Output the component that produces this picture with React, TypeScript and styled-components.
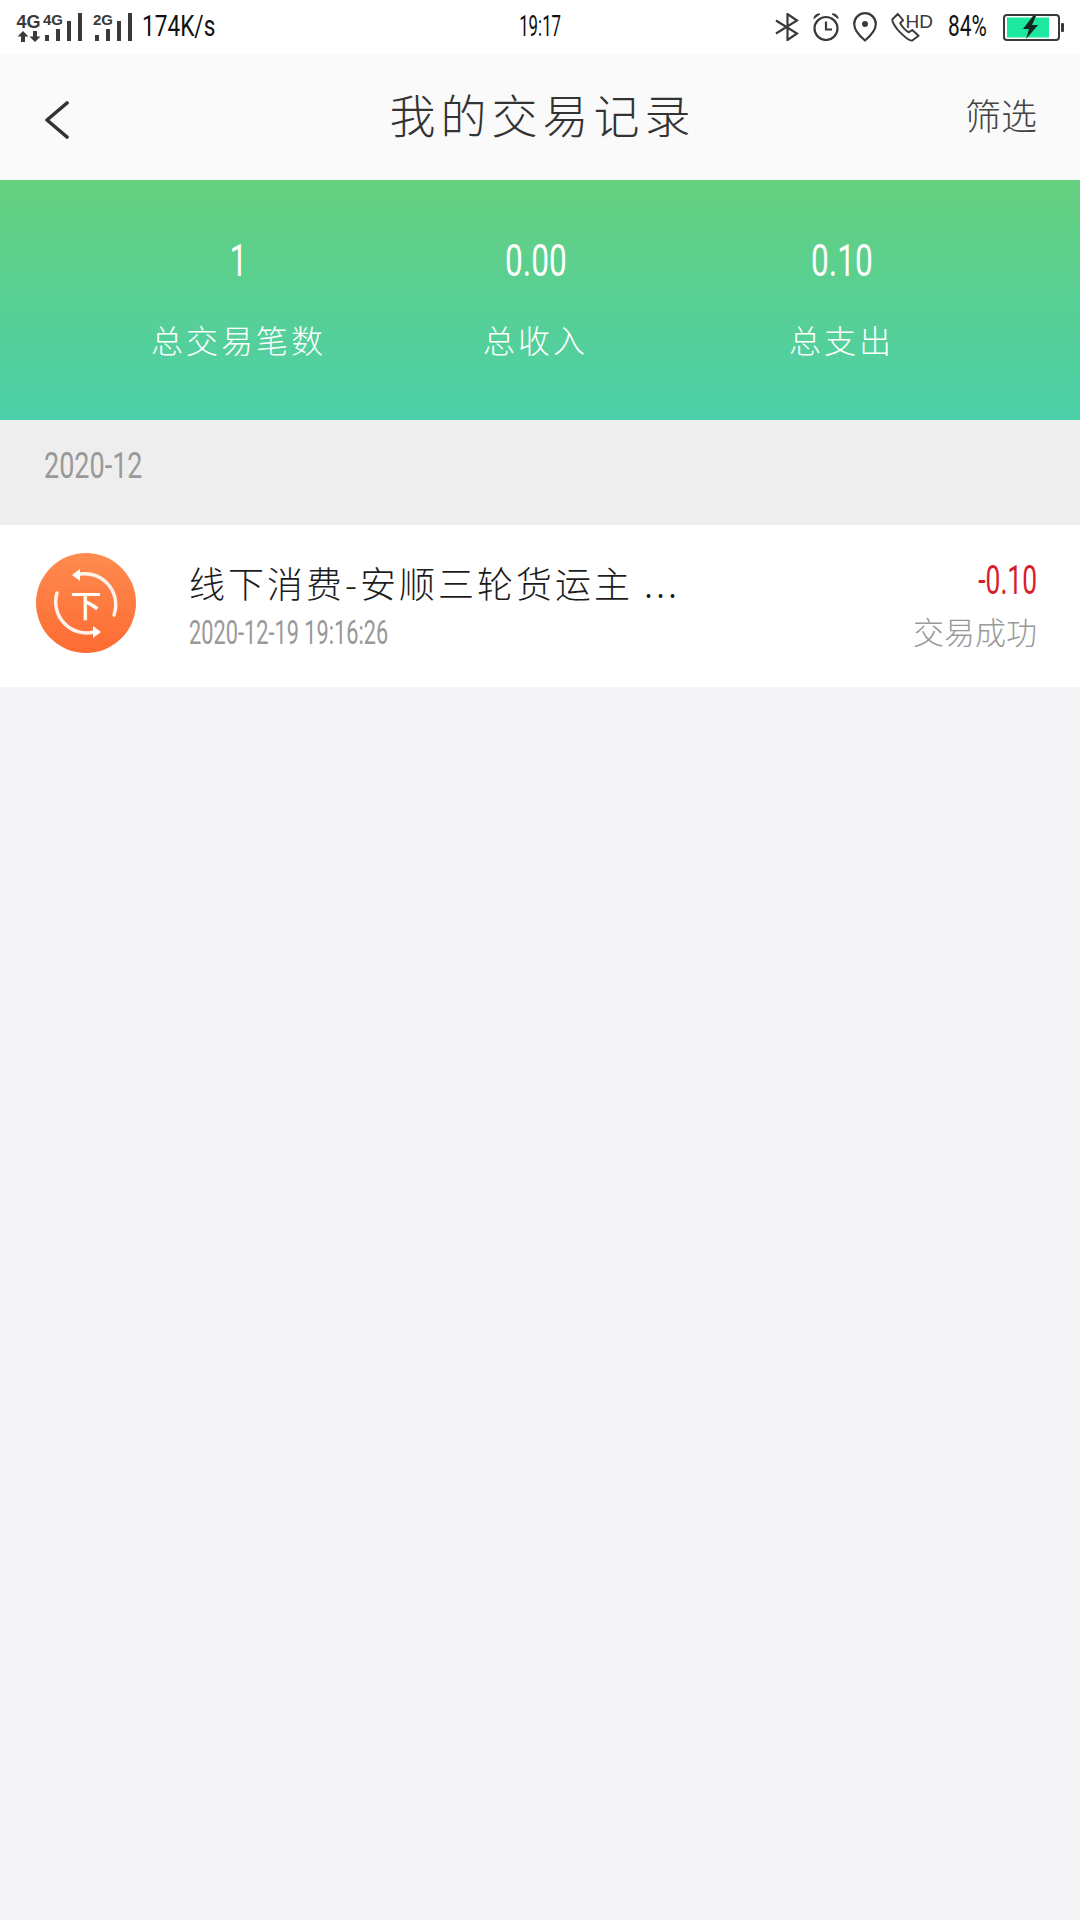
import React from 'react';
import styled, { createGlobalStyle } from 'styled-components';

const GlobalStyle = createGlobalStyle`
	html, body {
		margin: 0;
		padding: 0;
		background-color: #f4f4f6;
	}
	* {
		box-sizing: border-box;
	}
`;

const cjk = `'Noto Sans CJK SC', 'Noto Sans', sans-serif`;
const digits = `Roboto, 'Liberation Sans', sans-serif`;

const SignalBars = () => (
	<svg width="38" height="28" viewBox="0 0 38 28" fill="#3a3a3a">
		<rect x="1" y="22" width="4" height="6" />
		<rect x="12" y="16" width="4" height="12" />
		<rect x="23" y="8" width="4" height="20" />
		<rect x="34" y="0" width="4" height="28" />
	</svg>
);

const Arrows = () => (
	<svg width="24" height="11" viewBox="0 0 24 11" fill="#3a3a3a">
		<path d="M6 0l5.500 5.500H8V11H4V5.500H.5zM18 11l-5.500-5.500H16V0h4v5.500h3.500z" />
	</svg>
);

const Bluetooth = () => (
	<svg width="24" height="28" viewBox="0 0 24 28" fill="none" stroke="#3a3a3a" strokeWidth="2.200">
		<path d="M1 7.500l21 13-9.500 6.500V1L22 7.500 1 20.500" />
	</svg>
);

const Alarm = () => (
	<svg width="26" height="28" viewBox="0 0 26 28" fill="none" stroke="#3a3a3a" strokeWidth="2.200">
		<circle cx="13" cy="15.500" r="11.500" />
		<path d="M13 8.500v8h6" />
		<path d="M.8 5.500C1.500 1.800 4 .6 7 1zM25.200 5.500C24.500 1.800 22 .6 19 1z" fill="#3a3a3a" strokeWidth="1" />
	</svg>
);

const Pin = () => (
	<svg width="24" height="30" viewBox="0 0 24 30" fill="none" stroke="#3a3a3a" strokeWidth="2.200">
		<path d="M12 28.500C6 23.500 1.200 18 1.200 12a10.800 10.800 0 0 1 21.600 0C22.800 18 18 23.500 12 28.500z" />
		<circle cx="12" cy="12" r="3" fill="#3a3a3a" stroke="none" />
	</svg>
);

const Phone = () => (
	<svg width="29" height="29" viewBox="0 0 30 30" fill="none" stroke="#3a3a3a" strokeWidth="2">
		<path d="M7 1L1.500 6.500C1 8 2 11 7 17.500C13 24 19 29 22 28.500L28.500 23.500L22 17.500L18.500 20C16 19 11 14 9.500 10.500L12.500 7.500z" strokeLinejoin="round" />
	</svg>
);

const Battery = () => (
	<svg width="61" height="27" viewBox="0 0 61 27">
		<rect x="1" y="1" width="55" height="25" rx="3" fill="#fff" stroke="#3a3a3a" strokeWidth="2" />
		<rect x="4" y="3.500" width="42" height="20" fill="#1ce8a0" />
		<rect x="58" y="9" width="3" height="9" rx="1" fill="#3a3a3a" />
		<path d="M30 2L20 15h6l-3 10 12-14h-6l4-9z" fill="#14261f" />
	</svg>
);

const BackChevron = () => (
	<svg width="26" height="38" viewBox="0 0 26 38" fill="none" stroke="#333" strokeWidth="3.600" strokeLinecap="round" strokeLinejoin="round">
		<path d="M23 2L3 19l20 17" />
	</svg>
);

const OfflineIcon = () => (
	<svg width="100" height="100" viewBox="0 0 100 100">
		<defs>
			<linearGradient id="offline" x1="0" y1="0" x2="0" y2="1">
				<stop offset="0" stopColor="#ff8b50" />
				<stop offset="1" stopColor="#fc6b32" />
			</linearGradient>
		</defs>
		<circle cx="50" cy="50" r="50" fill="url(#offline)" />
		<g fill="none" stroke="#fff" strokeOpacity="0.9" strokeWidth="3.500" strokeLinecap="round">
			<path d="M40 22A31 31 0 0 1 78 62" />
			<path d="M21 40A31 31 0 0 0 58 79" />
		</g>
		<path d="M44 16l-8 6 8 6zM57 73l8 6-8 6z" fill="#fff" />
		<text x="50" y="64" textAnchor="middle" fontSize="31" fontWeight="500" fontFamily={cjk} fill="#fff">下</text>
	</svg>
);

const Page = styled.div`
	width: 1080px;
	min-height: 1920px;
	background-color: #f4f4f6;
	font-family: ${cjk};
`;

const StatusBar = styled.div`
	height: 54px;
	background-color: #fff;
	display: grid;
	grid-template-columns: 1fr auto 1fr;
	align-items: center;
	padding: 0 16px;
	color: #111;
`;

const StatusLeft = styled.div`
	display: flex;
	align-items: center;
`;

const StatusRight = styled.div`
	display: flex;
	align-items: center;
	justify-content: flex-end;
`;

const NetStack = styled.div`
	display: flex;
	flex-direction: column;
	align-items: center;
	width: 25px;
	margin-right: 3px;
`;

const NetLabel = styled.span<{ $size: number }>`
	font-family: 'Liberation Sans', sans-serif;
	font-weight: bold;
	font-size: ${p => p.$size}px;
	line-height: ${p => p.$size}px;
	color: #3a3a3a;
`;

const NetGroup = styled.div<{ $gap?: number }>`
	position: relative;
	display: flex;
	margin-left: ${p => p.$gap ?? 0}px;
`;

const SmallNet = styled(NetLabel)`
	position: absolute;
	left: -1px;
	top: -1px;
`;

const Squeezed = styled.span<{ $scale: number; $origin?: string }>`
	display: block;
	font-family: ${digits};
	font-weight: 400;
	white-space: nowrap;
	transform: scaleX(${p => p.$scale});
	transform-origin: ${p => p.$origin ?? 'center'};
`;

const StatusText = styled(Squeezed)<{ $width?: number; $left?: number; $right?: number }>`
	font-size: 29px;
	line-height: 32px;
	color: #111;
	margin-top: -3px;
	width: ${p => (p.$width ? `${p.$width}px` : 'auto')};
	margin-left: ${p => p.$left ?? 0}px;
	margin-right: ${p => p.$right ?? 0}px;
`;

const IconSlot = styled.span<{ $right: number }>`
	display: flex;
	margin-right: ${p => p.$right}px;
`;

const PhoneSlot = styled.span`
	position: relative;
	display: flex;
	margin-right: 15px;
	width: 42px;
	height: 29px;
`;

const HdLabel = styled.span`
	position: absolute;
	right: 0;
	top: -1px;
	font-family: 'Liberation Sans', sans-serif;
	font-size: 19px;
	line-height: 19px;
	color: #3a3a3a;
`;

const Header = styled.div`
	height: 126px;
	background-color: #fafafa;
	display: grid;
	grid-template-columns: 1fr auto 1fr;
	align-items: center;
	padding: 0 43px 0 44px;
`;

const BackButton = styled.div`
	display: flex;
	margin-top: 6px;
`;

const Title = styled.div`
	font-size: 46px;
	font-weight: 300;
	letter-spacing: 5px;
	color: #333;
	line-height: 52px;
	margin: -8px 0 0 4px;
`;

const FilterLink = styled.div`
	justify-self: end;
	font-size: 36px;
	font-weight: 300;
	color: #444;
	line-height: 40px;
	margin-top: -6px;
`;

const Summary = styled.div`
	height: 240px;
	background: linear-gradient(180deg, #65d07f 0%, #4bcfa8 100%);
	display: grid;
	grid-template-columns: 297px 297px 315px;
	padding: 58px 0 0 90px;
	color: #fff;
`;

const SummaryCell = styled.div`
	display: flex;
	flex-direction: column;
	align-items: center;
`;

const SummaryValue = styled(Squeezed)`
	font-size: 44px;
	line-height: 46px;
`;

const SummaryLabel = styled.div`
	margin-top: 34px;
	font-size: 32px;
	font-weight: 300;
	letter-spacing: 3px;
	line-height: 42px;
`;

const MonthBar = styled.div`
	height: 105px;
	background-color: #eeeeee;
	padding: 27px 0 0 44px;
`;

const MonthLabel = styled(Squeezed)`
	font-size: 36px;
	line-height: 38px;
	color: #999;
`;

const Record = styled.div`
	height: 162px;
	background-color: #fff;
	display: flex;
	align-items: flex-start;
	padding: 28px 43px 0 36px;
`;

const RecordIcon = styled.div`
	display: flex;
	width: 100px;
	margin-right: 53px;
`;

const RecordBody = styled.div`
	flex: 1;
	display: flex;
	flex-direction: column;
	padding-top: 6px;
`;

const RecordName = styled.div`
	font-size: 36px;
	font-weight: 300;
	letter-spacing: 3px;
	line-height: 46px;
	color: #1c1c1c;
`;

const RecordDate = styled(Squeezed)`
	font-size: 34px;
	line-height: 36px;
	margin-top: 9px;
	color: #999;
`;

const RecordSide = styled.div`
	display: flex;
	flex-direction: column;
	align-items: flex-end;
	padding-top: 5px;
`;

const RecordAmount = styled(Squeezed)`
	font-size: 40px;
	line-height: 46px;
	color: #d81e2c;
`;

const RecordStatus = styled.div`
	font-size: 31px;
	font-weight: 300;
	line-height: 36px;
	margin-top: 9px;
	color: #999;
`;

const summary = [
	{ value: '1', label: '总交易笔数' },
	{ value: '0.00', label: '总收入' },
	{ value: '0.10', label: '总支出' },
];

export default function App() {
	return (
		<Page>
			<GlobalStyle />
			<StatusBar>
				<StatusLeft>
					<NetStack>
						<NetLabel $size={18}>4G</NetLabel>
						<Arrows />
					</NetStack>
					<NetGroup>
						<SmallNet $size={15}>4G</SmallNet>
						<SignalBars />
					</NetGroup>
					<NetGroup $gap={12}>
						<SmallNet $size={15}>2G</SmallNet>
						<SignalBars />
					</NetGroup>
					<StatusText $scale={0.78} $origin="left" $left={10}>174K/s</StatusText>
				</StatusLeft>
				<StatusText $scale={0.58}>19:17</StatusText>
				<StatusRight>
					<IconSlot $right={14}><Bluetooth /></IconSlot>
					<IconSlot $right={14}><Alarm /></IconSlot>
					<IconSlot $right={14}><Pin /></IconSlot>
					<PhoneSlot>
						<Phone />
						<HdLabel>HD</HdLabel>
					</PhoneSlot>
					<StatusText $scale={0.72} $origin="left" $width={39} $right={16}>84%</StatusText>
					<Battery />
				</StatusRight>
			</StatusBar>
			<Header>
				<BackButton><BackChevron /></BackButton>
				<Title>我的交易记录</Title>
				<FilterLink>筛选</FilterLink>
			</Header>
			<Summary>
				{summary.map(item => (
					<SummaryCell key={item.label}>
						<SummaryValue $scale={0.72}>{item.value}</SummaryValue>
						<SummaryLabel>{item.label}</SummaryLabel>
					</SummaryCell>
				))}
			</Summary>
			<MonthBar>
				<MonthLabel $scale={0.75} $origin="left">2020-12</MonthLabel>
			</MonthBar>
			<Record>
				<RecordIcon><OfflineIcon /></RecordIcon>
				<RecordBody>
					<RecordName>线下消费-安顺三轮货运主 ...</RecordName>
					<RecordDate $scale={0.64} $origin="left">2020-12-19 19:16:26</RecordDate>
				</RecordBody>
				<RecordSide>
					<RecordAmount $scale={0.66} $origin="right">-0.10</RecordAmount>
					<RecordStatus>交易成功</RecordStatus>
				</RecordSide>
			</Record>
		</Page>
	);
}
